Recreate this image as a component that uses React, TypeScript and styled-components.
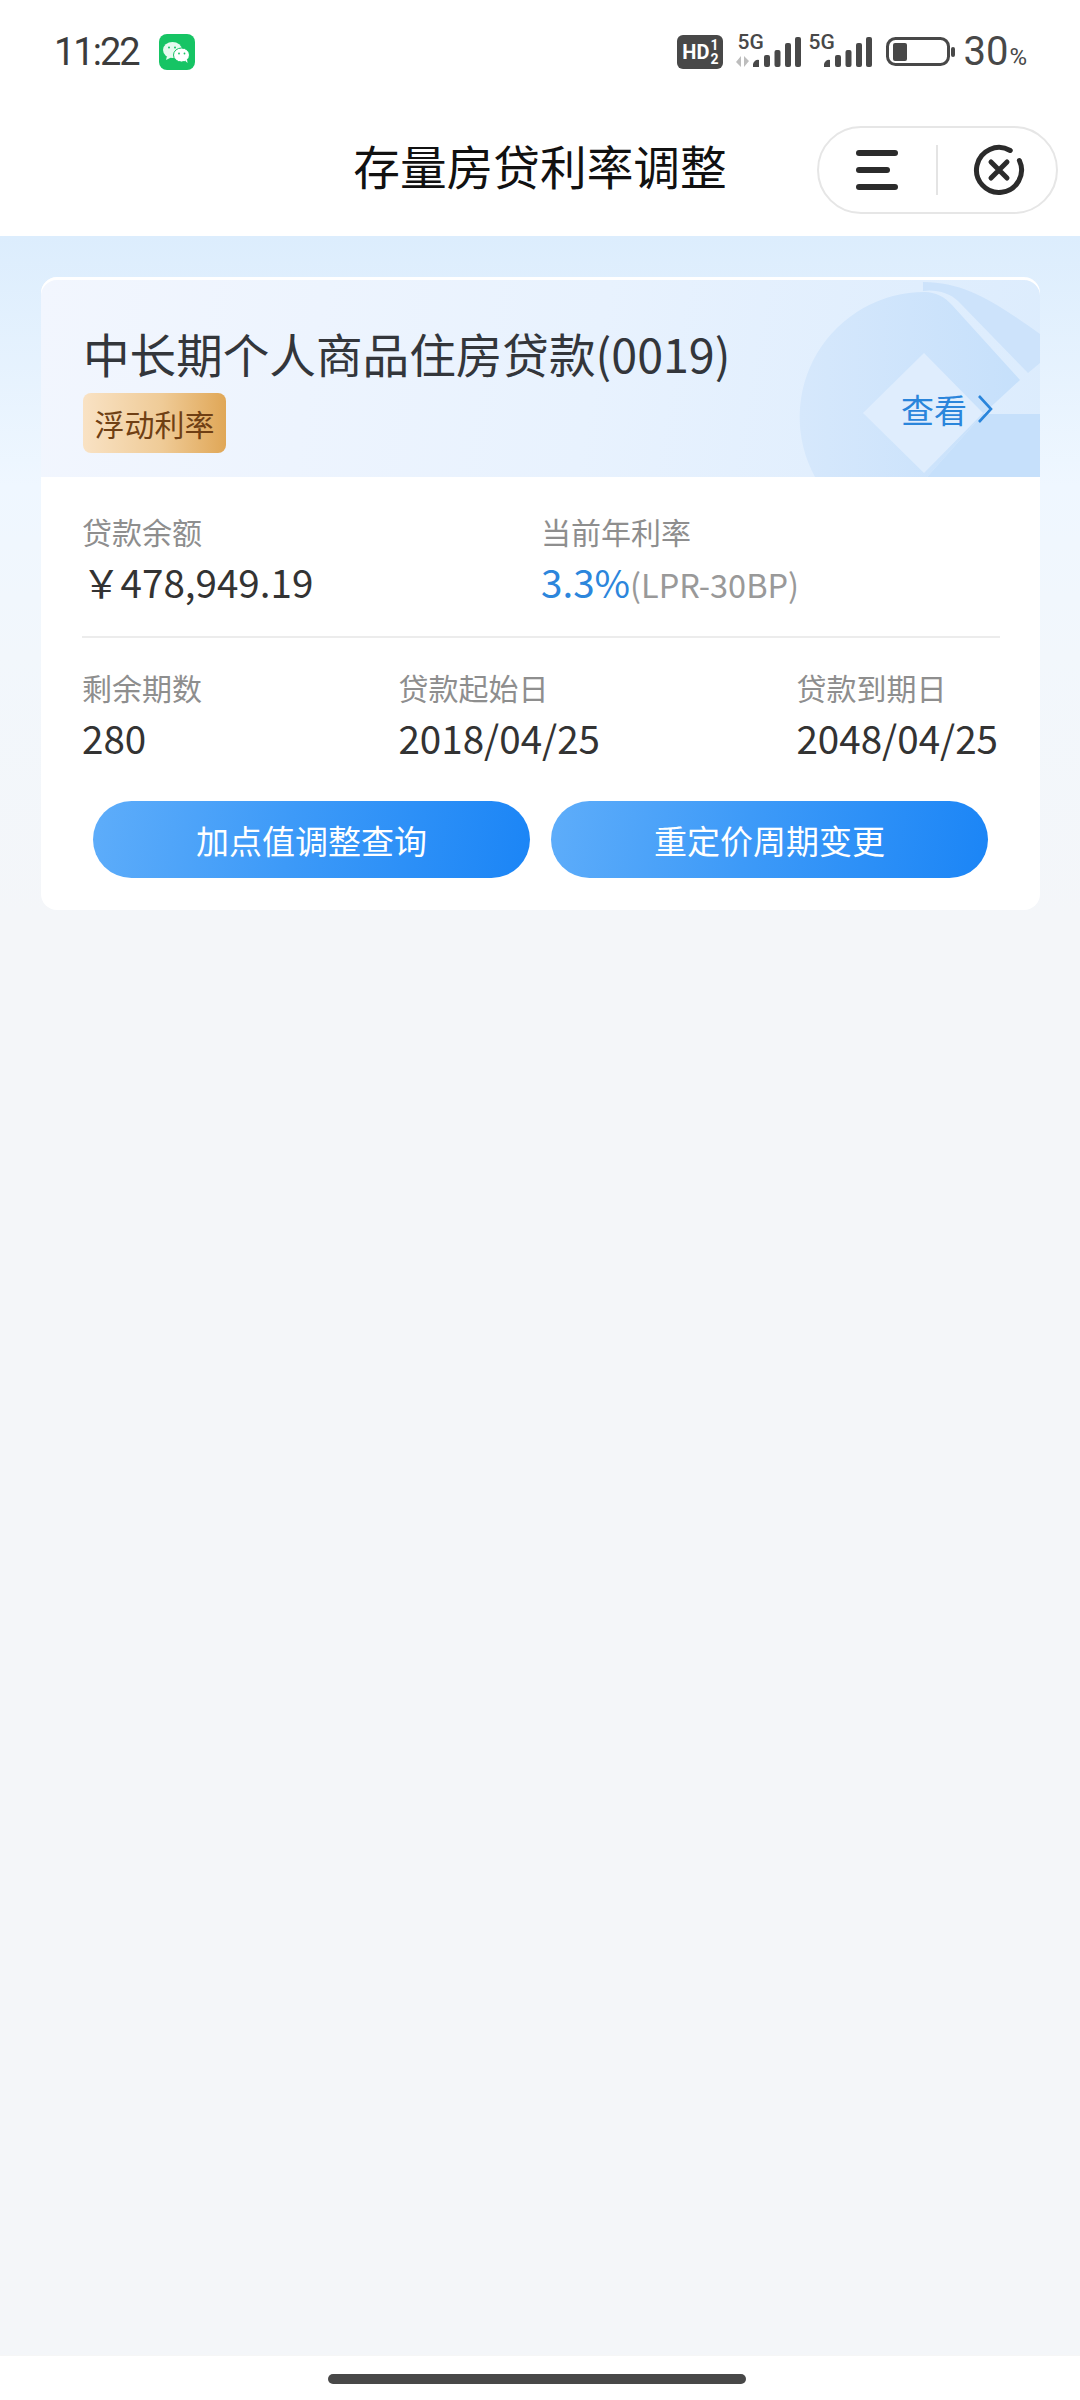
import styled, { createGlobalStyle } from 'styled-components';

const GlobalStyle = createGlobalStyle`
  html, body {
    margin: 0;
    padding: 0;
    background: #fff;
  }
  * {
    box-sizing: border-box;
  }
`;

const cjk = `"Noto Sans CJK SC", "Noto Sans", sans-serif`;

const Page = styled.div`
  width: 1080px;
  height: 2400px;
  display: flex;
  flex-direction: column;
  overflow: hidden;
  font-family: ${cjk};
  background: #fff;
`;

const StatusBar = styled.div`
  height: 100px;
  flex: none;
  display: flex;
  align-items: flex-start;
  justify-content: space-between;
  padding: 34px 53px 0 54px;
`;

const StatusLeft = styled.div`
  display: flex;
  align-items: center;
  gap: 20px;
`;

const Time = styled.span`
  font-family: Roboto, sans-serif;
  font-size: 38px;
  line-height: 36px;
  letter-spacing: -2px;
  color: #3c3c3c;
`;

const WechatBadge = styled.div`
  width: 36px;
  height: 36px;
  border-radius: 8px;
  background: #16c464;
`;

const StatusRight = styled.div`
  display: flex;
  align-items: flex-start;
`;

const HdBadge = styled.div`
  width: 46px;
  height: 34px;
  margin-top: 1px;
  border-radius: 6px;
  background: #484848;
  color: #fff;
  display: flex;
  align-items: center;
  justify-content: center;
  font-family: Roboto, sans-serif;
  font-weight: 700;
`;

const HdText = styled.span`
  font-size: 20px;
  line-height: 1;
`;

const HdFraction = styled.span`
  display: flex;
  flex-direction: column;
  font-size: 14px;
  line-height: 14px;
  margin-left: 1px;
`;

const SignalGroup = styled.div<{ $left: number }>`
  position: relative;
  width: 65px;
  height: 34px;
  margin-left: ${(p) => p.$left}px;
`;

const SignalLabel = styled.span`
  position: absolute;
  left: 1px;
  top: 1px;
  font-family: Roboto, sans-serif;
  font-size: 21px;
  font-weight: 500;
  line-height: 15px;
  color: #484848;
`;

const SignalIcon = styled.svg`
  display: block;
`;

const BatteryIcon = styled.svg`
  display: block;
  margin: 3px 0 0 14px;
`;

const Percent = styled.span`
  font-family: Roboto, sans-serif;
  font-size: 40px;
  line-height: 36px;
  color: #484848;
  margin-left: 8px;
  white-space: nowrap;
`;

const PercentSign = styled.span`
  font-size: 24px;
  margin-left: 1px;
`;

const NavBar = styled.div`
  height: 136px;
  flex: none;
  position: relative;
  display: flex;
  align-items: center;
  justify-content: center;
  padding-bottom: 6px;
`;

const NavTitle = styled.h1`
  margin: 0;
  font-size: 46.7px;
  line-height: 60px;
  font-weight: 400;
  color: #111;
`;

const Capsule = styled.div`
  position: absolute;
  left: 817px;
  top: 26px;
  width: 241px;
  height: 88px;
  border: 2px solid #e6e6e6;
  border-radius: 44px;
  display: flex;
  align-items: center;
  padding-left: 37px;
`;

const CapsuleDivider = styled.div`
  width: 2px;
  height: 50px;
  margin: 0 35px 0 38px;
  background: #e4e4e4;
`;

const Content = styled.main`
  flex: 1;
  padding: 41px 40px 0 41px;
  background: linear-gradient(180deg, #dcedfd 0, #eff7ff 250px, #f2f7fc 420px, #f4f6f9 680px);
`;

const Card = styled.section`
  border-radius: 16px;
  background: #fff;
  overflow: hidden;
`;

const CardHeader = styled.header`
  position: relative;
  height: 200px;
  padding: 46px 47px 0 42px;
  display: flex;
  justify-content: space-between;
  background: linear-gradient(100deg, #f2f6fe 0%, #e8f2fe 55%, #dcecfd 100%);
  box-shadow: inset 0 3px 0 #fff;
  border-radius: 16px 16px 0 0;
  overflow: hidden;
`;

const HeaderLogo = styled.svg`
  position: absolute;
  right: 0;
  top: 0;
`;

const HeaderLeft = styled.div`
  position: relative;
`;

const LoanTitle = styled.h2`
  margin: 0;
  font-size: 46.6px;
  line-height: 60px;
  font-weight: 400;
  color: #33363b;
`;

const RateTag = styled.span`
  display: inline-flex;
  align-items: center;
  justify-content: center;
  width: 143px;
  height: 60px;
  margin-top: 10px;
  border-radius: 8px;
  font-size: 30px;
  color: #6f3f14;
  background: linear-gradient(90deg, #f9e2c4 0%, #efcb97 55%, #e0a757 100%);
`;

const ViewLink = styled.a`
  position: relative;
  display: flex;
  align-items: center;
  gap: 10px;
  height: 44px;
  margin-top: 64px;
  font-size: 33px;
  line-height: 44px;
  color: #2a85db;
`;

const CardBody = styled.div`
  padding: 32px 40px 32px 41px;
`;

const TopRow = styled.div`
  display: grid;
  grid-template-columns: 459px 1fr;
  height: 129px;
  border-bottom: 2px solid #ececec;
`;

const BottomRow = styled.div`
  display: flex;
  justify-content: space-between;
  padding: 27px 2px 0 0;
`;

const Field = styled.div`
  display: flex;
  flex-direction: column;
`;

const Label = styled.span`
  font-size: 30px;
  line-height: 44px;
  color: #8e8e8e;
`;

const Value = styled.span`
  font-size: 38.6px;
  line-height: 56px;
  color: #333;
  white-space: nowrap;
`;

const RateValue = styled.span`
  color: #2c86dc;
`;

const RateNote = styled.span`
  font-size: 32.5px;
  color: #999;
`;

const ButtonRow = styled.div`
  display: grid;
  grid-template-columns: 437px 437px;
  gap: 21px;
  margin: 36px 0 0 11px;
`;

const ActionButton = styled.button`
  height: 77px;
  border: 0;
  border-radius: 39px;
  padding: 0;
  font-family: ${cjk};
  font-size: 33px;
  color: #fff;
  background: linear-gradient(100deg, #5eadfa 0%, #3d9af8 45%, #1b85f6 100%);
`;

const HomeArea = styled.div`
  height: 45px;
  flex: none;
  padding-top: 18px;
  display: flex;
  justify-content: center;
  align-items: flex-start;
  border-top: 1px solid #f6f6f6;
`;

const HomeBar = styled.div`
  width: 418px;
  height: 10px;
  margin-left: -6px;
  border-radius: 5px;
  background: #484848;
`;

const Signal = ({ arrows }: { arrows?: boolean }) => (
  <SignalIcon width="65" height="34" viewBox="0 0 65 34">
    <path d="M17 33v-3a5 5 0 0 1 6-4v7z" fill="#484848" />
    <rect x="28" y="21" width="6" height="12" rx="2" fill="#484848" />
    <rect x="38.5" y="16" width="6" height="17" rx="2" fill="#484848" />
    <rect x="49" y="9" width="6" height="24" rx="2" fill="#484848" />
    <rect x="59" y="3" width="6" height="30" rx="2" fill="#484848" />
    {arrows && <path d="M5 22v11l-5-5zM8 33V22l5 5z" fill="#bdbdbd" />}
  </SignalIcon>
);

export default function App() {
  return (
    <Page>
      <GlobalStyle />
      <StatusBar>
        <StatusLeft>
          <Time>11:22</Time>
          <WechatBadge>
            <svg width="36" height="36" viewBox="0 0 36 36">
              <ellipse cx="13.5" cy="16" rx="9.5" ry="8" fill="#e6faef" />
              <path d="M8 22l-1 4 5-2.5z" fill="#e6faef" />
              <ellipse cx="22.5" cy="21" rx="8" ry="7" fill="#fff" stroke="#16c464" strokeWidth="1" />
              <path d="M26 26.5l2.5 2.5-.5-4z" fill="#fff" />
              <circle cx="10" cy="13.5" r="1" fill="#16c464" />
              <circle cx="16" cy="13.5" r="1" fill="#16c464" />
              <circle cx="20" cy="19.5" r="0.9" fill="#16c464" />
              <circle cx="25.5" cy="19.5" r="0.9" fill="#16c464" />
            </svg>
          </WechatBadge>
        </StatusLeft>
        <StatusRight>
          <HdBadge>
            <HdText>HD</HdText>
            <HdFraction>
              <span>1</span>
              <span>2</span>
            </HdFraction>
          </HdBadge>
          <SignalGroup $left={13}>
            <SignalLabel>5G</SignalLabel>
            <Signal arrows />
          </SignalGroup>
          <SignalGroup $left={6}>
            <SignalLabel>5G</SignalLabel>
            <Signal />
          </SignalGroup>
          <BatteryIcon width="69" height="30" viewBox="0 0 69 30">
            <rect x="1.5" y="1.5" width="61" height="26" rx="8" fill="none" stroke="#484848" strokeWidth="3" />
            <rect x="7" y="6" width="14" height="18" rx="2" fill="#484848" />
            <rect x="65" y="10" width="4" height="10" rx="2" fill="#484848" />
          </BatteryIcon>
          <Percent>
            30<PercentSign>%</PercentSign>
          </Percent>
        </StatusRight>
      </StatusBar>

      <NavBar>
        <NavTitle>存量房贷利率调整</NavTitle>
        <Capsule>
          <svg width="42" height="40" viewBox="0 0 42 40">
            <rect x="0" y="0" width="42" height="6" rx="3" fill="#2b2b2b" />
            <rect x="0" y="17" width="34" height="6" rx="3" fill="#2b2b2b" />
            <rect x="0" y="34" width="42" height="6" rx="3" fill="#2b2b2b" />
          </svg>
          <CapsuleDivider />
          <svg width="52" height="52" viewBox="0 0 52 52">
            <path
              d="M46.4 16.5A22.5 22.5 0 1 1 37.25 6.5"
              fill="none"
              stroke="#2b2b2b"
              strokeWidth="5"
              strokeLinecap="round"
            />
            <path d="M18 18l16 16M34 18L18 34" stroke="#2b2b2b" strokeWidth="5" strokeLinecap="round" />
          </svg>
        </Capsule>
      </NavBar>

      <Content>
        <Card>
          <CardHeader>
            <HeaderLogo width="260" height="200" viewBox="0 0 260 200">
              <defs>
                <linearGradient id="logoFill" x1="0" y1="0" x2="1" y2="0">
                  <stop offset="0" stopColor="#d6e8fc" />
                  <stop offset="1" stopColor="#c6e0fb" />
                </linearGradient>
              </defs>
              <path d="M143 5C185 5 215 25 260 57V86L248 96L178 24C170 16 155 12 143 14Z" fill="#cde3fb" />
              <path d="M35 200A125 125 0 0 1 145 15C155 15 165 20 172 28L240 103L203 137L147 200Z" fill="url(#logoFill)" />
              <path d="M144 76L203 136L144 196L83 136Z" fill="#dfedfd" />
              <path d="M203 137H260V200H147Z" fill="#c6e0fb" />
            </HeaderLogo>
            <HeaderLeft>
              <LoanTitle>中长期个人商品住房贷款(0019)</LoanTitle>
              <RateTag>浮动利率</RateTag>
            </HeaderLeft>
            <ViewLink>
              查看
              <svg width="16" height="28" viewBox="0 0 16 28">
                <path d="M2 1l12 13L2 27" fill="none" stroke="#2a85db" strokeWidth="2.6" />
              </svg>
            </ViewLink>
          </CardHeader>
          <CardBody>
            <TopRow>
              <Field>
                <Label>贷款余额</Label>
                <Value>{'\uFFE5'}478,949.19</Value>
              </Field>
              <Field>
                <Label>当前年利率</Label>
                <Value>
                  <RateValue>3.3%</RateValue>
                  <RateNote>(LPR-30BP)</RateNote>
                </Value>
              </Field>
            </TopRow>
            <BottomRow>
              <Field>
                <Label>剩余期数</Label>
                <Value>280</Value>
              </Field>
              <Field>
                <Label>贷款起始日</Label>
                <Value>2018/04/25</Value>
              </Field>
              <Field>
                <Label>贷款到期日</Label>
                <Value>2048/04/25</Value>
              </Field>
            </BottomRow>
            <ButtonRow>
              <ActionButton>加点值调整查询</ActionButton>
              <ActionButton>重定价周期变更</ActionButton>
            </ButtonRow>
          </CardBody>
        </Card>
      </Content>

      <HomeArea>
        <HomeBar />
      </HomeArea>
    </Page>
  );
}
